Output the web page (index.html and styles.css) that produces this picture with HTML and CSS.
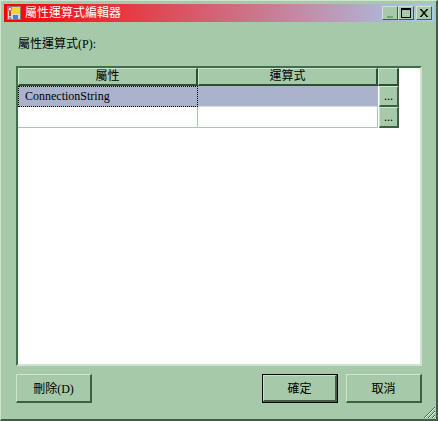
FILE: index.html
```html
<!DOCTYPE html>
<html lang="zh-Hant">
<head>
    <meta charset="UTF-8">
    <title>屬性運算式編輯器</title>
    <link rel="stylesheet" href="styles.css">
</head>
<body>
    <div class="window">
        <div class="titlebar">
            <svg class="app-icon" width="14" height="14" viewBox="0 0 14 14">
                <rect x="0.5" y="0.5" width="13" height="13" fill="#d8d8c8" stroke="#808078"/>
                <rect x="1.5" y="1.5" width="3" height="3" fill="#f0e8e8" stroke="#b04030" stroke-width="0.6"/>
                <rect x="2" y="5" width="2" height="5" fill="#c04030"/>
                <rect x="2" y="11" width="2" height="2" fill="#b08080"/>
                <rect x="5" y="1" width="8" height="7" fill="#f8d040"/>
                <rect x="6" y="9" width="5" height="4" fill="#4080e0"/>
            </svg>
            <span class="title-text">屬性運算式編輯器</span>
            <div class="caption-buttons">
                <div class="caption-btn">
                    <svg width="14" height="12" viewBox="0 0 14 12"><rect x="4" y="9" width="6" height="2" fill="#6aa878"/></svg>
                </div>
                <div class="caption-btn">
                    <svg width="14" height="12" viewBox="0 0 14 12"><path d="M2.5 2.5h9v8h-9z" fill="none" stroke="#000"/><rect x="2" y="1" width="10" height="2" fill="#000"/></svg>
                </div>
                <div class="caption-btn close-btn">
                    <svg width="14" height="12" viewBox="0 0 14 12"><path d="M3 2l7 8M4 2l7 8M10 2l-7 8M11 2l-7 8" fill="none" stroke="#000"/></svg>
                </div>
            </div>
        </div>

        <div class="content">
            <div class="field-label">屬性運算式(P):</div>

            <div class="grid-box">
                <div class="grid">
                    <div class="head-cell">屬性</div>
                    <div class="head-cell">運算式</div>
                    <div class="head-cell"></div>

                    <div class="cell selected focused">ConnectionString</div>
                    <div class="cell selected"></div>
                    <div class="ellipsis-btn">...</div>

                    <div class="cell"></div>
                    <div class="cell"></div>
                    <div class="ellipsis-btn">...</div>
                </div>
            </div>

            <div class="actions">
                <button class="btn">刪除(D)</button>
                <div class="actions-right">
                    <button class="btn btn-default">確定</button>
                    <button class="btn">取消</button>
                </div>
            </div>
        </div>

        <svg class="grip" width="13" height="13" viewBox="0 0 13 13">
            <path d="M1 12L12 1M5 12l7-7M9 12l3-3" fill="none" stroke="#4a6a50"/>
            <path d="M2 12L12 2M6 12l6-6M10 12l2-2" fill="none" stroke="#e4f0e4"/>
        </svg>
    </div>
</body>
</html>
```

FILE: styles.css
```css
html, body {
    margin: 0;
    padding: 0;
    background: #a5c9a9;
}
body {
    font-family: "Liberation Serif", "Noto Sans CJK TC", serif;
    font-size: 12px;
    color: #000;
}
.window {
    position: relative;
    box-sizing: border-box;
    width: 438px;
    height: 421px;
    background: #a5c9a9;
    border-style: solid;
    border-width: 1px 2px 2px 1px;
    border-color: #cfe3d0 #3f5f45 #3f5f45 #cfe3d0;
    padding: 3px 2px 0 3px;
    overflow: hidden;
}
.titlebar {
    display: flex;
    align-items: center;
    height: 18px;
    padding-left: 3px;
    background: linear-gradient(to right, #ff0000, #a6caf0);
    color: #fff;
}
.app-icon {
    flex: none;
}
.title-text {
    margin-left: 4px;
    line-height: 18px;
}
.caption-buttons {
    display: flex;
    margin-left: auto;
    margin-right: 2px;
}
.caption-btn {
    box-sizing: border-box;
    width: 16px;
    height: 14px;
    background: #a5c9a9;
    border-style: solid;
    border-width: 1px;
    border-color: #cfe3d0 #3f5f45 #3f5f45 #cfe3d0;
    display: flex;
    align-items: center;
    justify-content: center;
    overflow: hidden;
}
.close-btn {
    margin-left: 2px;
}
.content {
    padding: 15px 12px 0 12px;
}
.field-label {
    line-height: 14px;
    padding-left: 2px;
}
.grid-box {
    box-sizing: border-box;
    width: 406px;
    height: 300px;
    margin-top: 15px;
    background: #fff;
    border-style: solid;
    border-width: 2px;
    border-color: #3f6f4a #cfe3d0 #cfe3d0 #3f6f4a;
}
.grid {
    display: grid;
    grid-template-columns: 180px 180px 21px;
    grid-template-rows: 18px 21px 21px;
    width: 381px;
}
.head-cell {
    box-sizing: border-box;
    background: #a5c9a9;
    border-style: solid;
    border-width: 1px 2px 2px 1px;
    border-color: #cfe3d0 #2f4f35 #2f4f35 #cfe3d0;
    line-height: 15px;
    text-align: center;
}
.cell {
    box-sizing: border-box;
    border-right: 1px solid #a5c9a9;
    border-bottom: 1px solid #a5c9a9;
    padding-left: 7px;
    line-height: 19px;
    background: #fff;
}
.cell.selected {
    background: #aab3cb;
    border-right-color: #aab3cb;
    border-bottom-color: #cfe3d0;
}
.cell.focused {
    border: 1px dotted #000;
    padding-left: 6px;
}
.ellipsis-btn {
    box-sizing: border-box;
    margin-left: 1px;
    background: #a5c9a9;
    border-style: solid;
    border-width: 1px 2px 2px 1px;
    border-color: #cfe3d0 #3f5f45 #3f5f45 #cfe3d0;
    line-height: 19px;
    text-align: center;
}
.actions {
    display: flex;
    justify-content: space-between;
    width: 406px;
    margin-top: 8px;
}
.actions-right {
    display: flex;
    gap: 8px;
}
.btn {
    box-sizing: border-box;
    width: 76px;
    height: 29px;
    padding: 0;
    background: #a5c9a9;
    border-style: solid;
    border-width: 1px 2px 2px 1px;
    border-color: #cfe3d0 #3f5f45 #3f5f45 #cfe3d0;
    border-radius: 0;
    font-family: inherit;
    font-size: 12px;
    color: #000;
}
.btn-default {
    outline: 1px solid #000;
    outline-offset: -1px;
    border-width: 2px 3px 3px 2px;
}
.grip {
    position: absolute;
    right: 0;
    bottom: 0;
}
```
